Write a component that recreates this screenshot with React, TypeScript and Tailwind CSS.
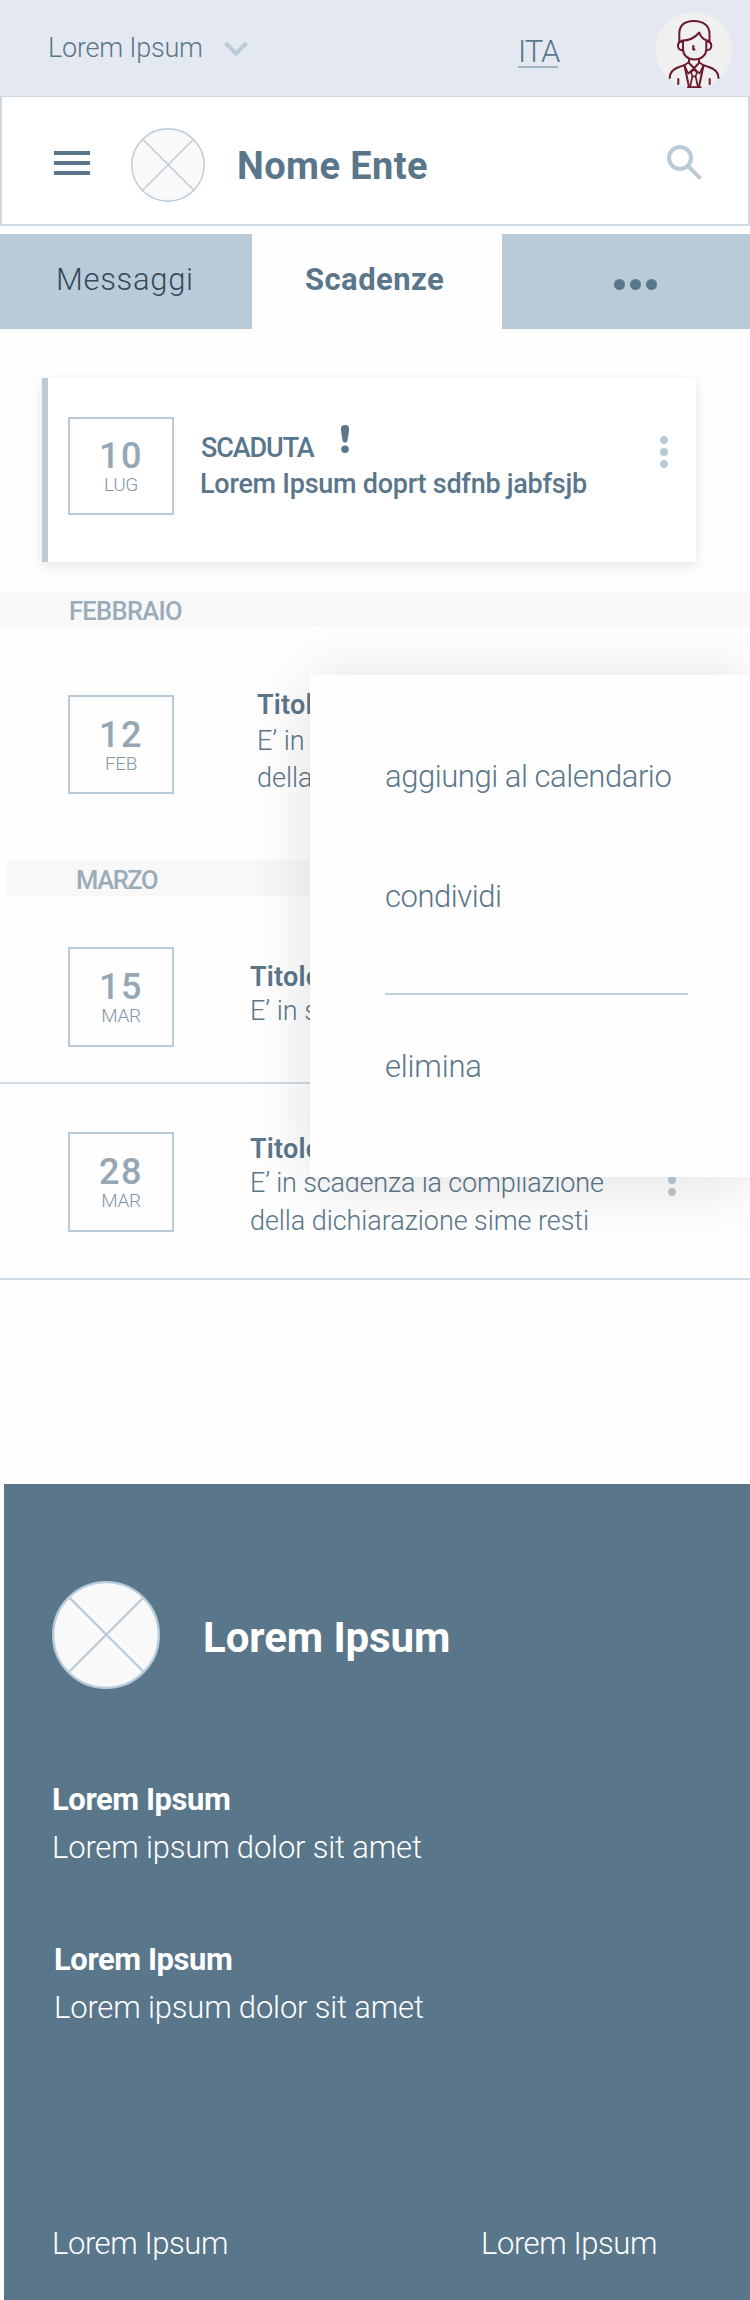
import type { ReactNode } from "react";

function Placeholder({ className, stroke }: { className: string; stroke: number }) {
  return (
    <svg className={className} viewBox="0 0 74 74" fill="none" stroke="#b9cbd9" strokeWidth={stroke}>
      <circle cx="37" cy="37" r="36.2" fill="#f9f9f9" />
      <path d="M12 11.500 62.500 62M62.200 11.800 11.800 62.200" />
    </svg>
  );
}

function Avatar() {
  return (
    <svg className="ml-[98px] mt-3 size-[76px] shrink-0" viewBox="0 0 76 76" fill="none" stroke="#6b1a2d" strokeWidth="2" strokeLinecap="round" strokeLinejoin="round">
      <ellipse cx="38" cy="38" rx="38.300" ry="38" fill="#f0f0f0" stroke="none" />
      <path d="M23.300 30.500V22C23.300 13 29 8.900 38 8.900S53.500 13.500 53.500 22v8.500" />
      <path d="M25.300 28.800C32 28.600 38 27 43.300 20.500c1.200 4.200 4 7.200 8.700 8.300" />
      <path d="M27 29.500V37c0 6 4.500 10.500 11.500 10.500S50.300 43 50.300 37v-7.500" />
      <path d="M25.800 29.600c-5.200.4-5.200 8.300 0.800 8.700M51.500 29.600c5.200.4 5.200 8.300-.8 8.700" />
      <path d="M37.300 33.300v4.200h2" strokeWidth="2.200" strokeLinecap="butt" />
      <path d="M33 48v3l5 5.300 5-5.300v-3" />
      <path d="M32.500 50.500 28.300 53.300l4 8.200 5.700-5.200 5.500 5.200 4-8.200-4.200-2.800" strokeWidth="1.700" />
      <path d="M13.700 66C13.900 58 20 55.800 28.300 53.300M62.500 66c-.2-8-6.500-10.200-15-12.700" />
      <path d="M28.700 54.500 33 74.800M47.300 54.500 43 74.800" />
      <path d="m38 57-3 3.700 1.400 3.600h3.200l1.400-3.600zM36.400 64.300 34.200 74.500M39.600 64.300l2.200 10.200" strokeWidth="1.700" />
      <path d="M22.300 67v5M53.700 67v5M32 75.200h12.500" />
    </svg>
  );
}

function Dots({ className }: { className: string }) {
  return (
    <div className={`flex shrink-0 flex-col gap-1 ${className}`}>
      <span className="size-2 rounded-full bg-[#b9cbd9]" />
      <span className="size-2 rounded-full bg-[#b9cbd9]" />
      <span className="size-2 rounded-full bg-[#b9cbd9]" />
    </div>
  );
}

function DateBox({ day, month, className }: { day: string; month: string; className: string }) {
  return (
    <div className={`flex w-[106px] shrink-0 flex-col items-center border-2 border-[#b7cbda] ${className}`}>
      <span className="text-[36px] leading-[38px] font-medium tracking-[1.5px] text-[#95a7b5]">{day}</span>
      <span className="text-[19px] leading-5 font-light tracking-[-0.4px] text-[#8297a7]">{month}</span>
    </div>
  );
}

function FooterBlock({ className, children }: { className: string; children: ReactNode }) {
  return <div className={`flex flex-col text-[31px] leading-[48px] ${className}`}>{children}</div>;
}

export default function App() {
  return (
    <div className="relative h-[2300px] w-[750px] overflow-hidden bg-[#fefefe] font-['Roboto',sans-serif] whitespace-nowrap text-[#5a768a]">
      <div className="flex h-24 items-start bg-[#e4e9f1]">
        <span className="mt-7 ml-12 w-[164px] text-[27px] leading-10 font-light tracking-[-0.24px]">Lorem Ipsum</span>
        <svg className="mt-[26px] size-12" viewBox="0 0 24 24" fill="#b9cbd9">
          <path d="M16.590 8.200 12 12.780 7.410 8.200 6 9.600l6 6 6-6z" transform="translate(0 -0.400)" />
        </svg>
        <span className="mt-[37px] ml-[258px] w-10 border-b-2 border-[#9fb4c2] text-[31px] leading-[29px] font-light tracking-[-1.07px]">ITA</span>
        <Avatar />
      </div>

      <div className="flex h-[130px] items-start border-x-2 border-t border-b-2 border-[#cddae5] bg-white">
        <svg className="mt-[42px] ml-[46px] size-12" viewBox="0 0 24 24" fill="#5a768a">
          <path d="M3 18h18v-2H3zm0-5h18v-2H3zm0-7v2h18V6z" />
        </svg>
        <Placeholder className="mt-[31px] ml-[35px] size-[74px]" stroke={1.4} />
        <h1 className="mt-[49px] ml-8 w-[424px] text-[38px] leading-10 font-bold tracking-[0.42px]">Nome Ente</h1>
        <svg className="mt-[42px] size-12 shrink-0" viewBox="0 0 24 24" fill="none" stroke="#b9cbd9" strokeWidth="2">
          <circle cx="9.500" cy="9.500" r="5.500" />
          <path d="m14 14 5.800 5.800" />
        </svg>
      </div>

      <div className="mt-2 flex h-[95px] text-[31px] leading-10">
        <div className="w-[252px] bg-[#b9cbd9] pt-[26px] pl-14 font-light tracking-[0.67px] text-[#34495a]">Messaggi</div>
        <div className="w-[250px] pt-[26px] pl-[53px] font-bold tracking-[0.44px]">Scadenze</div>
        <div className="flex flex-1 items-start gap-[5px] bg-[#b9cbd9] pt-[45px] pl-[112px]">
          <span className="h-[11px] w-[11px] rounded-full bg-[#5a768a]" />
          <span className="h-[11px] w-[11px] rounded-full bg-[#5a768a]" />
          <span className="h-[11px] w-[11px] rounded-full bg-[#5a768a]" />
        </div>
      </div>

      <div className="mt-[49px] ml-[42px] flex h-[184px] w-[654px] items-start border-l-[6px] border-[#b9cbd9] bg-white shadow-[0_4px_12px_rgba(0,0,0,0.1)]">
        <DateBox day="10" month="LUG" className="mt-[39px] ml-5 h-[98px] pt-[18px]" />
        <div className="mt-[52px] ml-[26px] w-[460px] text-[27px] leading-9 font-medium">
          <div className="flex items-start">
            <span className="w-[141px] pl-px tracking-[-1.1px]">SCADUTA</span>
            <svg className="-mt-[5px] h-7 w-2" viewBox="0 0 8 28" fill="#5a768a">
              <path d="M4 0c2.600 0 4 1.200 4 3.400 0 3-.8 8-1.600 12-.3 1.400-1.100 2-2.400 2s-2.100-.6-2.400-2C.8 11.400 0 6.400 0 3.400 0 1.200 1.400 0 4 0z" />
              <circle cx="4" cy="24.200" r="3.800" />
            </svg>
          </div>
          <div className="tracking-[-0.26px]">Lorem Ipsum doprt sdfnb jabfsjb</div>
        </div>
        <Dots className="mt-[58px]" />
      </div>

      <div className="mt-[30px] h-[35px] bg-[#f8f8f8] pt-[3px] pl-[69px] text-[25.5px] leading-8 font-medium tracking-[-0.69px] text-[#9aacb9]">FEBBRAIO</div>

      <div className="flex h-[233px] items-start">
        <DateBox day="12" month="FEB" className="mt-[68px] ml-[68px] h-[99px] pt-[19px]" />
        <div className="mt-[60px] ml-[83px] text-[27px] font-light">
          <div className="leading-9 font-semibold tracking-[0.2px]">Titolo</div>
          <div className="leading-9">E’ in</div>
          <div className="leading-[38px]">della</div>
        </div>
      </div>

      <div className="ml-[7px] h-9 bg-[#f8f8f8] pt-1 pl-[69px] text-[25.5px] leading-[33px] font-medium tracking-[-1.38px] text-[#9aacb9]">MARZO</div>

      <div className="flex h-[188px] items-start border-b-2 border-[#cfdce6]">
        <DateBox day="15" month="MAR" className="mt-[51px] ml-[68px] h-[100px] pt-[19px]" />
        <div className="mt-16 ml-[76px] text-[27px] font-light">
          <div className="leading-[34px] font-semibold tracking-[0.2px]">Titolo</div>
          <div className="leading-[34px]">E’ in s</div>
        </div>
      </div>

      <div className="flex h-[196px] items-start border-b-2 border-[#cfdce6]">
        <DateBox day="28" month="MAR" className="mt-12 ml-[68px] h-[100px] pt-[19px]" />
        <div className="mt-12 ml-[76px] w-[418px] text-[27px] font-light">
          <div className="leading-[34px] font-semibold tracking-[0.2px]">Titolo</div>
          <div className="leading-[34px] tracking-[-0.18px]">E’ in scadenza la compilazione</div>
          <div className="leading-[42px] tracking-[-0.06px]">della dichiarazione sime resti</div>
        </div>
        <Dots className="mt-20" />
      </div>

      <footer className="mt-[204px] ml-1 h-[816px] bg-[#5a768a] pt-[97px] text-white">
        <div className="flex items-start">
          <Placeholder className="ml-12 size-[108px]" stroke={1.6} />
          <h2 className="mt-[37px] ml-[43px] text-[42px] leading-10 font-bold tracking-[-0.09px]">Lorem Ipsum</h2>
        </div>
        <FooterBlock className="mt-[87px] ml-12">
          <b className="font-bold tracking-[-0.44px]">Lorem Ipsum</b>
          <span className="font-light tracking-[-0.17px]">Lorem ipsum dolor sit amet</span>
        </FooterBlock>
        <FooterBlock className="mt-16 ml-[50px]">
          <b className="font-bold tracking-[-0.44px]">Lorem Ipsum</b>
          <span className="font-light tracking-[-0.17px]">Lorem ipsum dolor sit amet</span>
        </FooterBlock>
        <div className="mt-[188px] ml-12 flex text-[31px] leading-[48px] font-light tracking-[-0.42px]">
          <span className="w-[429px]">Lorem Ipsum</span>
          <span>Lorem Ipsum</span>
        </div>
      </footer>

      <div className="absolute top-[675px] left-[310px] flex h-[502px] w-[440px] flex-col bg-[#fefefe] px-[75px] pt-[82px] text-[31px] leading-10 font-light shadow-[0_5px_60px_rgba(0,0,0,0.12)]">
        <span className="tracking-[-0.45px]">aggiungi al calendario</span>
        <span className="mt-20 tracking-[-0.45px]">condividi</span>
        <span className="mt-[76px] w-[303px] border-t-2 border-[#c3d0da]" />
        <span className="mt-[52px] tracking-[-0.2px]">elimina</span>
      </div>
    </div>
  );
}
